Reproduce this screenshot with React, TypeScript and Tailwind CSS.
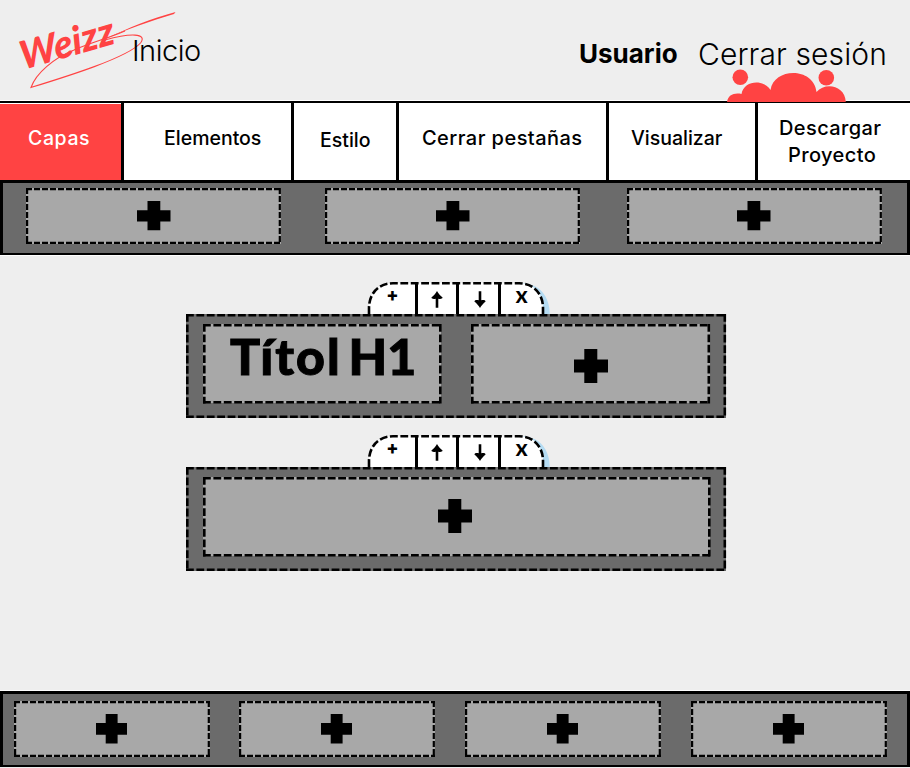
import type { ReactNode } from "react";

type Dash = "fine" | "wide";

function DashedBox({ className, dash, children }: { className: string; dash: Dash; children?: ReactNode }) {
  const wide = dash === "wide";
  const w = wide ? 2.6 : 2.2;
  return (
    <div className={"relative shrink-0 " + className}>
      <svg className="absolute inset-0 h-full w-full overflow-visible" fill="none" stroke="#000" strokeWidth={w} strokeDasharray={wide ? "7.8 2.6" : "6 2"}>
        <line x1="0" y1={w / 2} x2="100%" y2={w / 2} />
        <line x1={w / 2} y1="0" x2={w / 2} y2="100%" />
        <g className="translate-y-[-1.2px]">
          <line x1="0" y1="100%" x2="100%" y2="100%" />
        </g>
        <g className="translate-x-[-1.2px]">
          <line x1="100%" y1="0" x2="100%" y2="100%" />
        </g>
      </svg>
      {children}
    </div>
  );
}

function Plus({ className, kind }: { className: string; kind: "top" | "mid" | "foot" }) {
  const shapes = {
    top: { box: "0 0 34 30", d: "M10.5 0H23.3V9.3H33.5V20.6H23.3V29.3H10.5V20.6H0V9.3H10.5Z" },
    mid: { box: "0 0 34 34", d: "M10.3 0H23.3V10.4H34V23.6H23.3V34H10.3V23.6H0V10.4H10.3Z" },
    foot: { box: "0 0 31 30", d: "M9.7 0H21.6V9H31V20.8H21.6V29.5H9.7V20.8H0V9H9.7Z" },
  };
  return (
    <svg viewBox={shapes[kind].box} className={"block " + className}>
      <path d={shapes[kind].d} fill="#000" />
    </svg>
  );
}

function Arrow({ down }: { down?: boolean }) {
  return (
    <svg viewBox="0 0 12 17" className={down ? "h-[17px] w-3 rotate-180" : "h-[17px] w-3"}>
      <path d="M6 0C7.3 2.4 9.2 4.6 11.6 6.6C11.2 8 9.500 8.300 7.300 7.800V16.800H4.700V7.800C2.500 8.300 0.800 8 0.400 6.600C2.800 4.600 4.700 2.400 6 0Z" fill="#000" />
    </svg>
  );
}

function Toolbar() {
  return (
    <div className="relative ml-[368px] flex h-8 w-[176px]">
      <svg viewBox="0 0 184 32" className="absolute left-0 top-0 h-8 w-[184px] overflow-visible">
        <path d="M155 1.2C172 2 181.700 15 181.700 32H150Z" fill="#b5dcf3" />
        <path d="M1 32V26C1 12 10 1.3 25 1.3H151C166 1.3 175 12 175 26V32Z" fill="#fff" />
        <path d="M1 32V26C1 12 10 1.3 25 1.3H151C166 1.3 175 12 175 26V32" fill="none" stroke="#000" strokeWidth="2.6" strokeDasharray="7.8 2.6" />
      </svg>
      <div className="relative flex w-[50px] justify-center border-r-[3px] border-black pt-[2px] pl-[2px] font-['Inter'] text-[18px] leading-[22px] font-extrabold">+</div>
      <div className="relative flex w-[41px] justify-center border-r-[3px] border-black pt-[9px]"><Arrow /></div>
      <div className="relative flex w-[42px] justify-center border-r-[3px] border-black pt-[9px] pl-[3px]"><Arrow down /></div>
      <div className="relative flex w-[41px] justify-center pt-[4px] font-['Lato'] text-[17px] leading-[22px] font-extrabold">X</div>
    </div>
  );
}

function Logo() {
  return (
    <svg viewBox="0 0 180 96" className="absolute left-0 top-0 h-24 w-[180px]" fill="#ff4343">
      <path d="M175.5 12L174 14C150 21 128 29 103 40C130 27 150 19 175.5 12Z" />
      <path d="M105 40C130 33 148 33 140.5 43C127 58 65 77 31 87.500C36 73 54 58 74 50C90 43 106 39 125 31" fill="none" stroke="#ff4343" strokeWidth="1.1" />
      <text transform="translate(23 70) rotate(-16) skewX(-4)" fontFamily="Lato" fontWeight="900" fontStyle="italic" fontSize="39" textLength="97" lengthAdjust="spacingAndGlyphs">Weizz</text>
    </svg>
  );
}

function People() {
  return (
    <svg viewBox="0 0 120 34" className="absolute left-[727px] top-[67.500px] h-[34px] w-[120px]" fill="#ff4343">
      <circle cx="13.300" cy="9.200" r="7.800" />
      <circle cx="99.300" cy="9.800" r="7.800" />
      <path d="M0 34C1 27 7 24.500 14.500 26C17 12 37 11 43.500 22C47 -1 87 -1 89.500 24C98 14 118 17 118.800 34Z" />
    </svg>
  );
}

export default function App() {
  return (
    <div className="flex h-[768px] w-[910px] flex-col overflow-hidden bg-[#eeeeee] font-['Inter',sans-serif] text-black">
      <header className="relative flex h-[101px] shrink-0 border-b border-white whitespace-nowrap">
        <Logo />
        <span className="relative ml-[132px] w-[447px] pt-[33px] text-[29px] leading-[36px] font-[350] tracking-[-0.5px]">Inicio</span>
        <span className="w-[119px] pt-[36px] text-[26px] leading-[36px] font-bold">Usuario</span>
        <span className="pt-[36px] text-[30px] leading-[36px] font-light tracking-[0.100px]">Cerrar sesión</span>
        <People />
      </header>

      <nav className="flex h-[82px] shrink-0 border-t-2 border-b-[3px] border-black bg-white text-[19.500px] leading-[27px] font-[450] whitespace-nowrap">
        <div className="mt-px w-[121px] bg-[#ff4343] pt-[21px] pl-[28px] tracking-[0.600px] text-white">Capas</div>
        <div className="w-[170px] border-l-[3px] border-black pt-[22px] pl-[40px]">Elementos</div>
        <div className="w-[108px] border-x-[3px] border-black pt-[24px] pl-[26px]">Estilo</div>
        <div className="w-[210px] border-r-[3px] border-black pt-[22px] pl-[23px] text-[20px] tracking-[0.450px]">Cerrar pestañas</div>
        <div className="w-[149px] border-r-[3px] border-black pt-[22px] pl-[22px]">Visualizar</div>
        <div className="pt-[12px] pl-[21px] text-[20px] tracking-[0.400px]">
          <div>Descargar</div>
          <div className="pl-[9px]">Proyecto</div>
        </div>
      </nav>

      <section className="flex h-[72px] shrink-0 border-x-[3px] border-b-2 border-black bg-[#6b6b6b] pt-[4.500px] pl-[23px]">
        <DashedBox dash="fine" className="mr-[44px] h-[56px] w-[255px] bg-[#a8a8a8] pt-[13px] pl-[111px]"><Plus kind="top" className="h-[30px] w-[34px]" /></DashedBox>
        <DashedBox dash="fine" className="mr-[47px] h-[56px] w-[255px] bg-[#a8a8a8] pt-[13px] pl-[111px]"><Plus kind="top" className="h-[30px] w-[34px]" /></DashedBox>
        <DashedBox dash="fine" className="h-[56px] w-[255px] bg-[#a8a8a8] pt-[13px] pl-[110px]"><Plus kind="top" className="h-[30px] w-[34px]" /></DashedBox>
      </section>

      <main className="flex h-[436px] shrink-0 flex-col border-y border-white pt-[26px]">
        <Toolbar />
        <DashedBox dash="wide" className="ml-[186px] flex h-[104px] w-[540px] bg-[#6b6b6b] pt-[9.500px] pl-[16.500px]">
          <DashedBox dash="wide" className="mr-[30px] h-[79.500px] w-[238.500px] bg-[#a8a8a8] pt-[2px] pl-[27.500px]">
            <h1 className="relative font-['Lato'] text-[50px] leading-[60px] font-black whitespace-nowrap [-webkit-text-stroke:1px_black]">
              <span className="tracking-[2px]">Títol</span>
              <span className="ml-[7px]">H1</span>
            </h1>
          </DashedBox>
          <DashedBox dash="wide" className="h-[79.500px] w-[239px] bg-[#a8a8a8] pt-[25.500px] pl-[102.500px]"><Plus kind="mid" className="h-[34px] w-[34px]" /></DashedBox>
        </DashedBox>
        <div className="h-[17px]" />
        <Toolbar />
        <DashedBox dash="wide" className="ml-[186px] h-[104px] w-[540px] bg-[#6b6b6b] pt-[9.500px] pl-[16.500px]">
          <DashedBox dash="wide" className="h-[79.500px] w-[507.500px] bg-[#a8a8a8] pt-[22.500px] pl-[235.500px]"><Plus kind="mid" className="h-[34px] w-[34px]" /></DashedBox>
        </DashedBox>
      </main>

      <footer className="flex h-[76px] shrink-0 border-x-[3px] border-t-[3px] border-b-2 border-black bg-[#6b6b6b] pt-[7px] pl-[10.500px]">
        {[0, 1, 2, 3].map((i) => (
          <DashedBox key={i} dash="fine" className="mr-[29.700px] h-[56px] w-[196px] bg-[#a8a8a8] pt-[13px] pl-[82px]"><Plus kind="foot" className="h-[30px] w-[31px]" /></DashedBox>
        ))}
      </footer>
    </div>
  );
}
